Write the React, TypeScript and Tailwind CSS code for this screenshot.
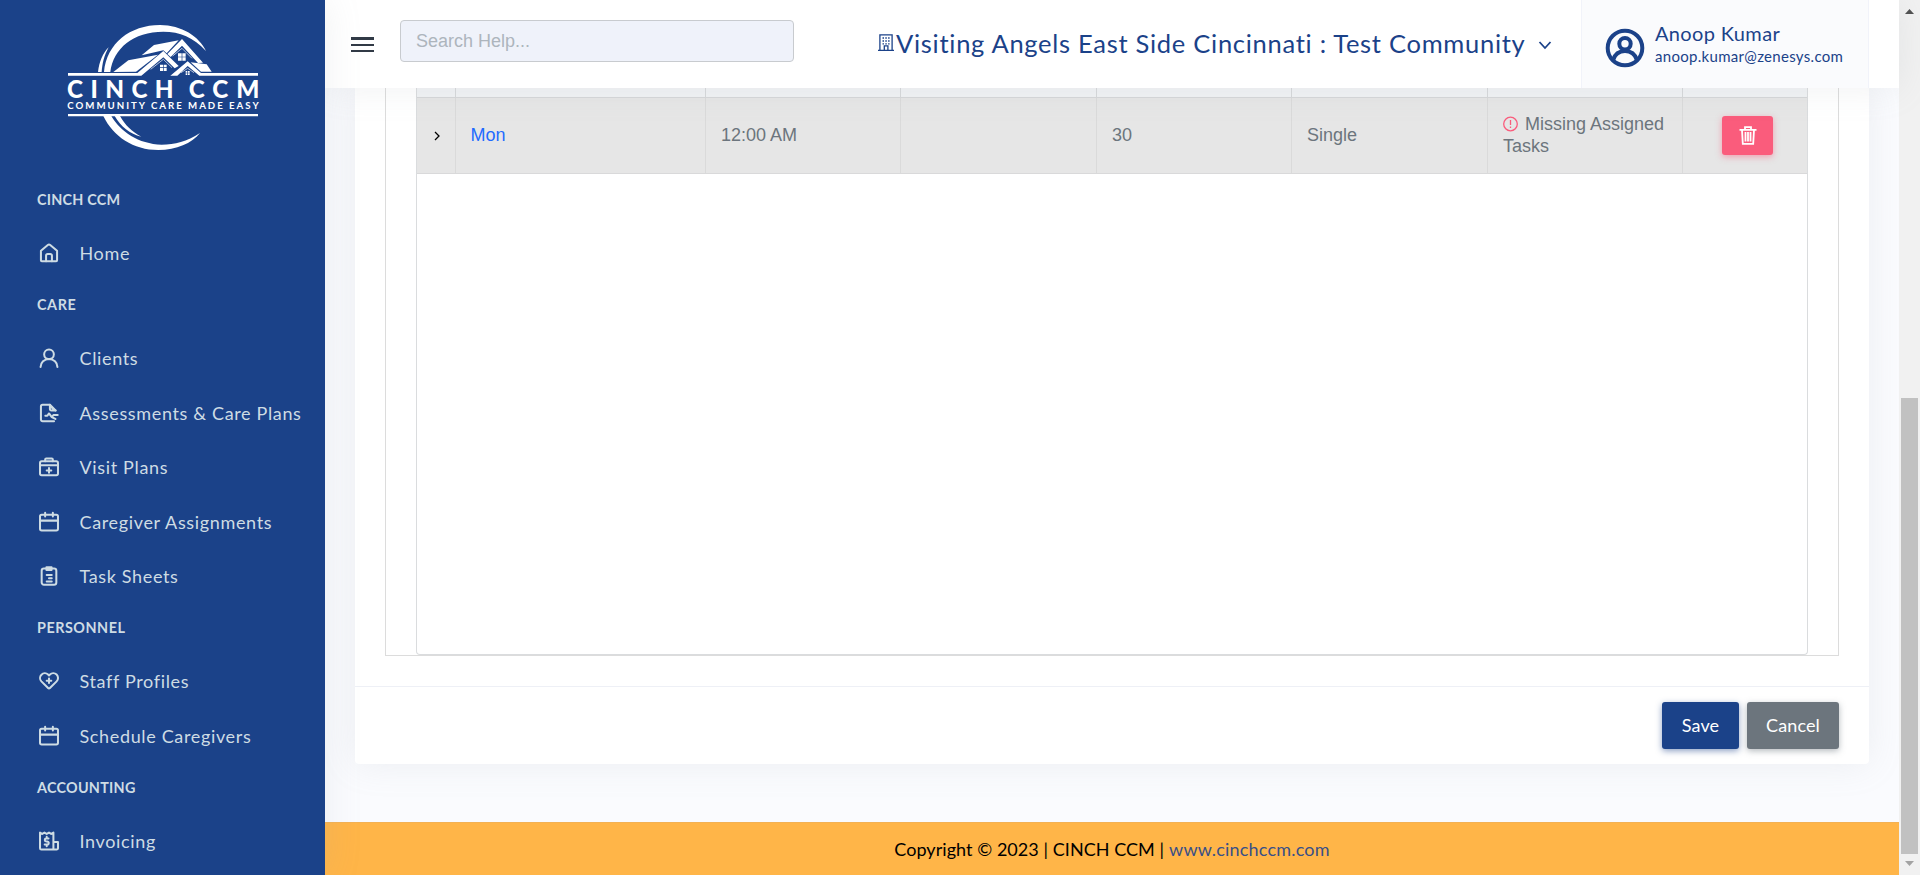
import React from "react";

const S = ({ children }: { children: React.ReactNode }) => (
  <svg width="22" height="22" viewBox="0 0 24 24" fill="none" stroke="currentColor" strokeWidth="2.200" strokeLinecap="round" strokeLinejoin="round" className="shrink-0">
    {children}
  </svg>
);

const HomeIcon = () => (
  <S><path d="M3.200 9.500 10.700 3.300a2 2 0 0 1 2.600 0l7.500 6.200V20a1 1 0 0 1-1 1H4.200a1 1 0 0 1-1-1Z" /><path d="M8.800 21v-6a1.800 1.800 0 0 1 1.800-1.800h2.800a1.800 1.800 0 0 1 1.800 1.800v6" /></S>
);
const UserIcon = () => (
  <S><circle cx="12" cy="8" r="5.300" /><path d="M2.800 21.700a9.200 8.700 0 0 1 18.400 0" /></S>
);
const FileIcon = () => (
  <S><path d="M17.500 21H5a1.800 1.800 0 0 1-1.800-1.800V4.800A1.800 1.800 0 0 1 5 3h8l6.200 6.200" /><path d="M13 3v4.400a1.800 1.800 0 0 0 1.800 1.800h4.400M14 5l3.500 3.500M8 15h2.200l1.800-2.500 3 4 1.800-2.300h4.700M15 16.500l4 2" /></S>
);
const MedkitIcon = () => (
  <S><rect x="2.200" y="5.800" width="19.600" height="15.200" rx="1.800" /><path d="M7.800 5.800V4a1.200 1.200 0 0 1 1.200-1.200h6A1.200 1.200 0 0 1 16.200 4v1.800M2.200 10h19.600M12 13.200v5M9.500 15.700h5" /></S>
);
const CalendarIcon = () => (
  <S><rect x="2.200" y="4" width="19.600" height="17.200" rx="1.800" /><path d="M2.200 10.500h19.600M7.800 2v4M16.200 2v4" /></S>
);
const ClipboardIcon = () => (
  <S><rect x="4" y="3.800" width="16" height="17.800" rx="2.500" /><path d="M9.200 2.500h5.600v3H9.200zM9.500 11h5.500M12 14.500h3M9.500 18h5.500" /></S>
);
const HeartIcon = () => (
  <S><path d="M20.300 5a5.200 5.200 0 0 0-7.300 0l-1 .9-1-.9a5.200 5.200 0 0 0-7.300 7.400l7.300 7.300a1.400 1.400 0 0 0 2 0l7.300-7.300A5.200 5.200 0 0 0 20.300 5Z" /><path d="M12 9.300v5M9.500 11.800h5" /></S>
);
const InvoiceIcon = () => (
  <S><path d="M16.800 13V2.800l-2.400 1.500L12 2.800 9.500 4.300 7 2.800 4.600 4.300 2.200 2.800v17a1.500 1.500 0 0 0 1.500 1.500h16.600a1.500 1.500 0 0 0 1.500-1.500V13h-5v8" /><path d="M11.500 9.300H9a1.600 1.600 0 0 0 0 3.200h1a1.700 1.700 0 0 1 0 3.400H7.300M9.500 7.500v1.800M9.500 16v1.700" /></S>
);

const nav = [
  { title: "CINCH CCM", ls: "tracking-[0.2px]", items: [{ label: "Home", Icon: HomeIcon }] },
  {
    title: "CARE",
    ls: "tracking-[0.6px]",
    items: [
      { label: "Clients", Icon: UserIcon },
      { label: "Assessments & Care Plans", Icon: FileIcon },
      { label: "Visit Plans", Icon: MedkitIcon },
      { label: "Caregiver Assignments", Icon: CalendarIcon },
      { label: "Task Sheets", Icon: ClipboardIcon },
    ],
  },
  {
    title: "PERSONNEL",
    ls: "tracking-[0.5px]",
    items: [
      { label: "Staff Profiles", Icon: HeartIcon },
      { label: "Schedule Caregivers", Icon: CalendarIcon },
    ],
  },
  { title: "ACCOUNTING", ls: "tracking-[0.250px]", items: [{ label: "Invoicing", Icon: InvoiceIcon }] },
];

const Logo = () => (
  <svg width="194" height="130" viewBox="198 66 582 390" className="block" fill="#fff">
    <path d="M312 216C320 130 390 75 480 75C545 75 598 110 618 153C580 112 540 95 490 95C400 95 340 145 331 216Z" />
    <path d="M294 216C298 185 308 160 326 142C312 168 307 190 305 216Z" />
    <path d="M310 348C340 410 400 450 475 450C530 450 575 430 600 399C560 425 525 434 485 434C415 432 362 395 334 348Z" />
    <path d="M344 348C362 380 390 402 424 410C395 395 375 375 360 348Z" />
    <path d="M340 216 385 181 474 164 408 215Z" />
    <path d="M425 166 462 135 536 121 500 160 490 151Z" />
    <path d="M204 219H412L490 153 536 198 524 205 490 172 424 227H204Z" />
    <path d="M502 162 546 117 609 188 594 189 546 137 512 171Z" />
    <path d="M511 227 563 184 603 219H774V227H598L563 198 532 227Z" />
    <path d="M572 187 620 193 635 215H603Z" />
    <path d="M534 160h11v10h-11zM547 160h10v10h-10zM534 172h11v10h-11zM547 172h10v10h-10zM480 194h9v8h-9zM491 194h9v8h-9zM480 204h9v9h-9zM491 204h9v9h-9zM557 213h5v5h-5zM564 213h5v5h-5zM557 220h5v5h-5zM564 220h5v5h-5z" />
    <path d="M452 208 490 178 516 203M518 168 546 145 576 175M543 218 563 205 582 218" fill="none" stroke="#fff" strokeWidth="2" />
    <path d="M204 342H774v7H204z" />
    <text x="201" y="295" fontFamily="Lato" fontWeight="900" fontSize="73" textLength="320" lengthAdjust="spacing">CINCH</text>
    <text x="566" y="295" fontFamily="Lato" fontWeight="900" fontSize="73" textLength="212" lengthAdjust="spacing">CCM</text>
    <text x="202" y="327" fontFamily="Lato" fontWeight="700" fontSize="29" textLength="574" lengthAdjust="spacing">COMMUNITY CARE MADE EASY</text>
  </svg>
);

const cols = "grid grid-cols-[39px_250px_195px_196px_195px_196px_195px_125px]";

export default function App() {
  return (
    <div className="flex h-[875px] w-[1920px] overflow-hidden bg-[#fafbfe] font-[Lato,sans-serif]">
      <aside className="relative z-20 flex h-full w-[325px] shrink-0 flex-col bg-[#1b4289] text-[#cedce4] shadow-[0_0_35px_0_rgba(154,161,171,0.15)]">
        <div className="flex h-[176px] shrink-0 pl-[66px] pt-[22px]"><Logo /></div>
        {nav.map((s) => (
          <section key={s.title} className="flex shrink-0 flex-col">
            <h2 className={"flex h-[50.700px] items-start pl-[37px] pt-[14px] text-[14.400px] font-bold leading-5 " + s.ls}>{s.title}</h2>
            {s.items.map(({ label, Icon }) => (
              <a key={label} className="flex h-[54.500px] items-center gap-[20px] pb-[2px] pl-[37.500px] text-[18px] leading-6 tracking-[0.650px]">
                <Icon /><span className="whitespace-nowrap">{label}</span>
              </a>
            ))}
          </section>
        ))}
      </aside>

      <div className="flex w-[1574px] shrink-0 flex-col">
        <header className="relative z-10 flex h-[88px] shrink-0 bg-white text-[#1b4289] shadow-[0_0_35px_0_rgba(154,161,171,0.15)]">
          <div className="ml-[26px] mt-[37px] flex h-[15px] w-[23px] flex-col justify-between">
            <i className="h-[2.500px] bg-[#313a46]" /><i className="h-[2px] bg-[#313a46]" /><i className="h-[2px] bg-[#313a46]" />
          </div>
          <div className="ml-[26px] mt-5 flex h-[42px] w-[394px] items-center rounded-[4px] border border-[#c8cbcf] bg-[#eff2fa] pl-[15px] font-['Liberation_Sans'] text-[18px] text-[#adb5bd]">Search Help...</div>
          <div className="ml-[84px] flex items-start pt-[27px]">
            <svg width="16" height="17" viewBox="0 0 16 17" fill="none" stroke="currentColor" className="mt-[7px]" strokeWidth="1.300">
              <path d="M1.900 16V.8h12.200V16M0 16.300h16M6.300 16v-4.200h3.600V16" />
              <path d="M4.500 4h1.500M7.300 4h1.500M10.100 4h1.500M4.500 7h1.500M7.300 7h1.500M10.100 7h1.500M4.500 9.800h1.500M7.300 9.800h1.500M10.100 9.800h1.500" />
            </svg>
            <span className="w-[644px] whitespace-nowrap pl-[2px] text-[25.500px] leading-[32px] tracking-[0.720px]">Visiting Angels East Side Cincinnati : Test Community</span>
            <svg width="14" height="10" viewBox="0 0 14 10" fill="none" stroke="currentColor" strokeWidth="1.800" className="mt-[14px]"><path d="M1.500 1 7 7l5.500-6" /></svg>
          </div>
          <div className="ml-auto mr-[30px] flex w-[288px] border-x border-[#f1f3fa] bg-[#fafbfd] pl-[23px]">
            <svg width="40" height="40" viewBox="0 0 40 40" fill="none" stroke="currentColor" strokeWidth="4" className="mt-[28px]">
              <circle cx="20" cy="20" r="17.300" /><circle cx="20" cy="15.800" r="5.700" /><path d="M8 32c2-6 6-9 12-9s10 3 12 9" />
            </svg>
            <div className="pl-[10px] pt-[21px]">
              <div className="text-[20px] leading-6 tracking-[0.350px]">Anoop Kumar</div>
              <div className="text-[15px] leading-[22px] tracking-[0.300px]">anoop.kumar@zenesys.com</div>
            </div>
          </div>
        </header>

        <main className="flex h-[734px] shrink-0 flex-col px-[30px]">
          <div className="flex h-[676px] flex-col rounded-b-[4px] bg-white shadow-[0_0_35px_0_rgba(154,161,171,0.15)]">
            <div className="mx-[30px] h-[568px] border-x border-b border-[#dcdcdc] px-[30px]">
              <div className="h-[567px] rounded-b-[4px] border-x border-b border-[#dadcde] font-['Liberation_Sans'] text-[18px] text-[#6c757d]">
                <div className={cols + " h-[10px] border-b border-[#d6d7d9] bg-[#f1f3f5]"}>
                  {[0, 1, 2, 3, 4, 5, 6].map((i) => <div key={i} className="border-r border-[#d6d8da]" />)}<div />
                </div>
                <div className={cols + " h-[76px] items-stretch border-b border-[#d9d9da] bg-[#e6e6e6]"}>
                  <div className="flex items-center justify-center border-r border-[#dadada] text-black">
                    <svg width="6" height="10" viewBox="0 0 6 10" fill="none" stroke="currentColor" strokeWidth="1.300" className="ml-[2px]"><path d="m1 1 4 4-4 4" /></svg>
                  </div>
                  <div className="flex items-center border-r border-[#dadada] pl-[14.500px] text-[#1f6bff]">Mon</div>
                  <div className="flex items-center border-r border-[#dadada] pl-[15px]">12:00 AM</div>
                  <div className="border-r border-[#dadada]" />
                  <div className="flex items-center border-r border-[#dadada] pl-[15px]">30</div>
                  <div className="flex items-center border-r border-[#dadada] pl-[15px]">Single</div>
                  <div className="flex items-center border-r border-[#dadada] pb-[2px] pl-[15px]">
                    <div className="leading-[22px]">
                      <div className="flex items-center gap-[7px] whitespace-nowrap">
                        <svg width="15" height="16" viewBox="0 0 15 16" fill="none" stroke="#fa5c7c" strokeWidth="1.300"><circle cx="7.500" cy="8" r="6.800" /><path d="M7.500 4v5M7.500 10.500v1.500" /></svg>
                        Missing Assigned
                      </div>
                      Tasks
                    </div>
                  </div>
                  <div className="flex items-center justify-center pl-[4px]">
                    <div className="flex h-[39px] w-[51px] items-center justify-center rounded-[3px] bg-[#fa5c7c] text-white shadow-[0_2px_6px_0_rgba(250,92,124,0.5)]">
                      <svg width="18" height="19" viewBox="0 0 18 19" fill="none" stroke="currentColor" strokeWidth="1.800"><path d="M.5 3.800h17M6 3.500V1.200h6v2.300M3 4l.8 13.800h10.400L15 4M6.500 6v9.500M9 6v9.500M11.500 6v9.500" /></svg>
                    </div>
                  </div>
                </div>
              </div>
            </div>
            <div className="mt-[30px] flex h-[78px] items-start justify-end gap-2 border-t border-[#eef0f6] pr-[30px] pt-[15px] text-[18px] tracking-[0.100px] text-white">
              <div className="flex h-[47px] w-[77px] items-center justify-center rounded-[3px] bg-[#1b4289] shadow-[0_2px_6px_0_rgba(27,66,137,0.5)]">Save</div>
              <div className="flex h-[47px] w-[92px] items-center justify-center rounded-[3px] bg-[#6c757d] shadow-[0_2px_6px_0_rgba(108,117,125,0.5)]">Cancel</div>
            </div>
          </div>
        </main>
        <footer className="flex h-[53px] items-center justify-center gap-[5px] border-t border-[#f3b154] bg-[#ffb548] text-[18px] text-black">
          <span className="tracking-[0.050px]">Copyright © 2023 | CINCH CCM |</span><span className="tracking-[0.200px] text-[#394f87]">www.cinchccm.com</span>
        </footer>
      </div>

      <div className="flex w-[21px] flex-col items-center bg-[#f1f1f1]">
        <svg width="9" height="5" viewBox="0 0 9 5" className="mt-[9px]" fill="#505050"><path d="M0 5h9L4.500 0z" /></svg>
        <div className="mt-[384px] h-[456px] w-[17px] bg-[#c1c1c1]" />
        <svg width="9" height="5" viewBox="0 0 9 5" className="mt-[7px]" fill="#a3a3a3"><path d="M0 0h9L4.500 5z" /></svg>
      </div>
    </div>
  );
}
